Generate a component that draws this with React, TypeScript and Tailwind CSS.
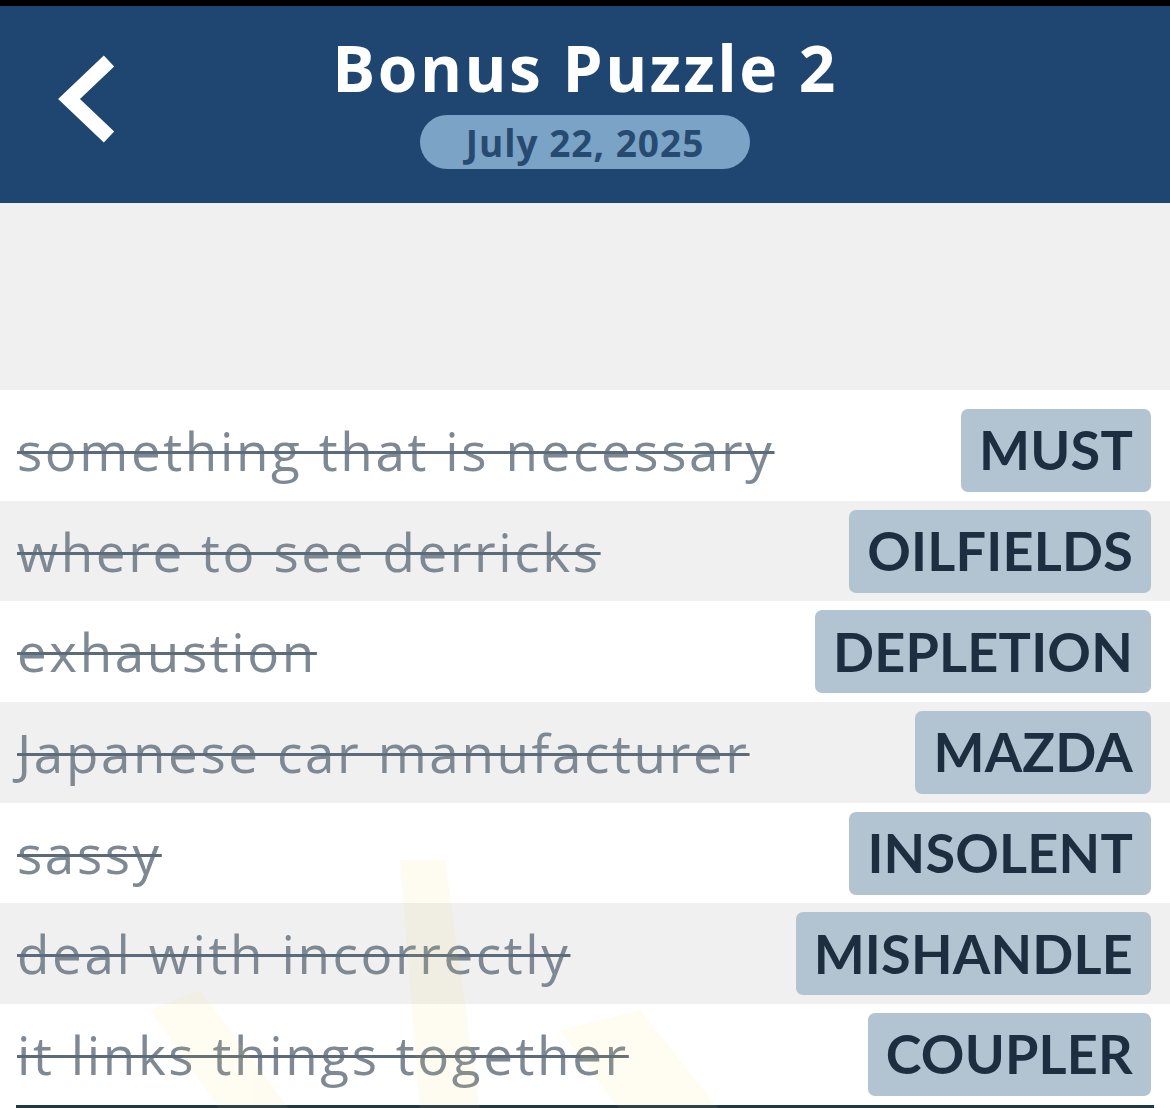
import React from "react";

const rows = [
  { clue: "something that is necessary", answer: "MUST" },
  { clue: "where to see derricks", answer: "OILFIELDS" },
  { clue: "exhaustion", answer: "DEPLETION" },
  { clue: "Japanese car manufacturer", answer: "MAZDA" },
  { clue: "sassy", answer: "INSOLENT" },
  { clue: "deal with incorrectly", answer: "MISHANDLE" },
  { clue: "it links things together", answer: "COUPLER" },
];

function Chevron() {
  return (
    <svg width="62" height="90" viewBox="0 0 62 90" className="block">
      <path d="M53 6 L13 44 L53 82" fill="none" stroke="#ffffff" strokeWidth="15" strokeLinecap="butt" strokeLinejoin="miter" />
    </svg>
  );
}

export default function App() {
  return (
    <div className="w-[1170px] h-[1108px] overflow-hidden bg-white font-['Open_Sans','Noto_Sans',sans-serif]">
      <div className="h-[6px] bg-black" />
      <header className="relative h-[197px] bg-[#1f4670] flex flex-col items-center">
        <div className="absolute left-[56px] top-[49px]">
          <Chevron />
        </div>
        <h1 className="mt-[25px] text-[64px] leading-[74px] font-bold text-white tracking-[2.5px]">Bonus Puzzle 2</h1>
        <div className="mt-[10px] w-[330px] h-[54px] rounded-full bg-[#7aa3c6] flex items-center justify-center">
          <span className="text-[37px] font-bold text-[#264a70] leading-none tracking-[1px]">July 22, 2025</span>
        </div>
      </header>
      <div className="h-[187px] bg-[#f0f0f0]" />
      <div className="relative pt-[10px]">
        {rows.map((r, i) => (
          <div
            key={r.answer}
            className={`h-[100.7px] flex items-center justify-between pl-[17px] pr-[19px] ${i % 2 === 1 ? "bg-[#f0f0f0]" : "bg-white"}`}
          >
            <span className="text-[53px] leading-none text-[#7e8994] tracking-[2.6px] line-through decoration-[#5c6b7a] decoration-[3px]">
              {r.clue}
            </span>
            <span className="h-[83px] px-[18px] rounded-[7px] bg-[#b2c4d1] flex items-center font-['Lato',sans-serif] text-[54px] font-bold text-[#1c2e40] leading-none tracking-[0.2px]">
              {r.answer}
            </span>
          </div>
        ))}
        <svg className="absolute left-0 top-[440px] pointer-events-none" width="800" height="280" viewBox="0 0 800 280">
          <g fill="#fcd34d" opacity="0.07">
            <polygon points="400,30 445,30 480,280 420,280" />
            <polygon points="150,180 200,160 290,280 220,280" />
            <polygon points="560,200 640,180 720,280 620,280" />
          </g>
        </svg>
        <div className="mx-[16px] h-[3px] bg-[#1f3844]" />
      </div>
    </div>
  );
}
